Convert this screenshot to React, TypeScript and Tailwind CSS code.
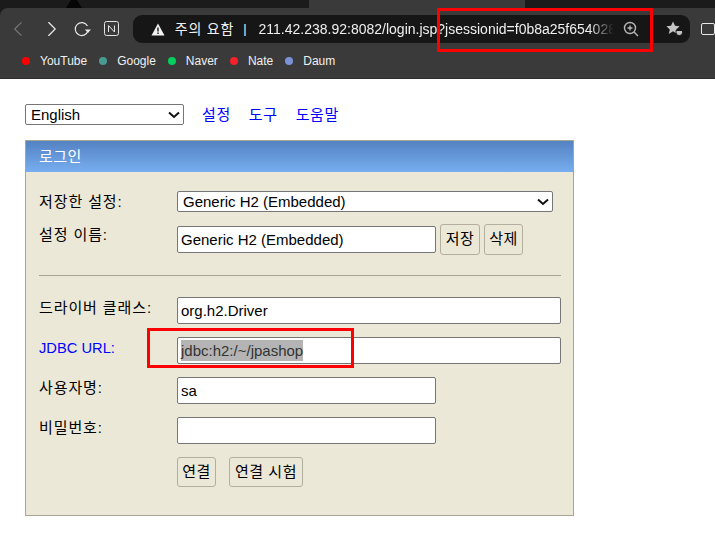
import { ChevronLeft, ChevronRight } from "lucide-react";

const bookmarks = [
  { name: "YouTube", color: "bg-[#ff0000]" },
  { name: "Google", color: "bg-[#4a9a94]" },
  { name: "Naver", color: "bg-[#03cf5d]" },
  { name: "Nate", color: "bg-[#f5222d]" },
  { name: "Daum", color: "bg-[#7b93d6]" },
];

const sans = "font-['Liberation_Sans','Noto_Sans_CJK_KR',sans-serif]";
const field = "h-[27px] bg-white border border-[#767676] rounded-[2px] px-[3px] text-[15px] text-black";
const btn = "bg-[#ece8d8] border border-[#b3ae9d] rounded-[3px] text-[15px] tracking-[0.5px] text-black";
const label = "w-[138px] text-[15px] leading-[20px] tracking-[0.9px] text-black";

function App() {
  return (
    <div className={`w-[715px] h-[547px] overflow-hidden bg-white ${sans}`}>
      {/* Browser chrome */}
      <div className="relative h-[79px] bg-[#1b1b1b]">
        <div className="flex h-[8px]">
          <svg width="24" height="8" viewBox="0 0 24 8" className="ml-[62px]">
            <path d="M4 8l5-8h6l5 8z" fill="#050505" />
          </svg>
          <div className="ml-[223px] w-[216px] bg-[#3a3a3a]" />
        </div>
        <div className="h-[71px] bg-[#3a3a3a] rounded-tl-[8px] border-b border-[#2c2c2c]">
          <div className="flex items-center h-[32px] pt-[5px] box-content">
            <ChevronLeft size={26} strokeWidth={1} className="ml-[5px] text-[#777]" />
            <ChevronRight size={26} strokeWidth={1.1} className="ml-[8px] text-[#e8e8e8]" />
            <svg width="18" height="18" viewBox="0 0 18 18" className="ml-[8px]" fill="none">
              <path d="M14.5 6A6.5 6.5 0 1 0 15 11" stroke="#e8e8e8" strokeWidth="1.2" />
              <path d="M12 9.5h6l-3 3.5z" fill="#e8e8e8" />
            </svg>
            <svg width="16" height="16" viewBox="0 0 16 16" className="ml-[13px]" fill="none">
              <rect x="0.5" y="0.5" width="14" height="14" rx="2" stroke="#e8e8e8" />
              <path d="M4.5 11V4.5l6 6.5V4.5" stroke="#e8e8e8" />
            </svg>
            <div className="flex items-center ml-[13px] w-[559px] h-[28px] bg-[#161616] rounded-[9px] text-[#f0f0f0]">
              <svg width="14" height="13" viewBox="0 0 14 13" className="ml-[18px]">
                <path d="M7 0.5l6.5 12H0.5z" fill="#f2f2f2" />
                <path d="M6.3 4.5h1.4v4H6.3zM6.3 9.5h1.4v1.4H6.3z" fill="#161616" />
              </svg>
              <span className="ml-[10px] text-[14px] tracking-[0.8px] whitespace-nowrap">주의 요함</span>
              <span className="ml-[9px] text-[13px]">|</span>
              <span className="ml-[12px] w-[355px] whitespace-nowrap text-[14px] [mask-image:linear-gradient(to_right,black_93%,transparent)]">
                211.42.238.92:8082/login.jsp?jsessionid=f0b8a25f654028
              </span>
              <svg width="16" height="16" viewBox="0 0 16 16" className="ml-[9px]" fill="none" stroke="#b8b8b8" strokeWidth="1.4">
                <circle cx="7" cy="7" r="5.5" />
                <path d="M11 11l4 4M7 4.5v5M4.5 7h5" />
              </svg>
              <svg width="18" height="16" viewBox="0 0 18 16" className="ml-[27px]">
                <path d="M7 0.5l2 4.3 4.6.5-3.4 3.1 1 4.6L7 10.2l-4.2 2.8 1-4.6L.4 5.3 5 4.8z" fill="#c4c4c4" />
                <path d="M10 9.5h6.5v2a3 3 0 0 1-3.2 3 3 3 0 0 1-3.3-3z" fill="#c4c4c4" stroke="#161616" />
              </svg>
            </div>
            <div className="ml-[11px] shrink-0 w-[14px] h-[12px] rounded-[2px] border border-[#e8e8e8]" />
          </div>
          <div className="flex items-center h-[16px] mt-[8px] ml-[22px] text-[12px] text-[#f0f0f0]">
            {bookmarks.map((b) => (
              <div key={b.name} className="flex items-center mr-[12px]">
                <span className={`w-[8px] h-[8px] rounded-full ${b.color}`} />
                <span className="ml-[10px]">{b.name}</span>
              </div>
            ))}
          </div>
        </div>
        {/* Annotation over the address bar */}
        <div className="absolute left-[437px] top-[8px] w-[216px] h-[44px] border-[3px] border-[#ff0000]" />
      </div>

      {/* Page */}
      <div className="pl-[25px]">
        <div className="flex items-center h-[21px] mt-[25px] text-[15px] leading-[20px]">
          <div className="relative w-[159px] h-[21px] bg-white border border-[#767676] rounded-[2px] pl-[5px] leading-[20px] text-black">
            English
            <svg width="12" height="8" viewBox="0 0 12 8" className="absolute right-[3px] top-[6px]" fill="none" stroke="#111" strokeWidth="2">
              <path d="M1 1.5l5 4.5 5-4.5" />
            </svg>
          </div>
          <a className="ml-[18px] tracking-[0.6px] text-[#0000ff]">설정</a>
          <a className="ml-[18px] tracking-[0.6px] text-[#0000ff]">도구</a>
          <a className="ml-[18px] tracking-[0.6px] text-[#0000ff]">도움말</a>
        </div>

        <div className="relative mt-[15px] w-[549px] h-[376px] bg-[#ece8d8] border border-[#a8a595]">
          <div className="h-[31px] pl-[13px] pt-[5px] text-[15px] leading-[22px] tracking-[0.5px] text-white bg-gradient-to-b from-[#5482c2] to-[#77aef0]">
            로그인
          </div>
          <div className="pl-[13px] pt-[19px]">
            <div className="flex">
              <div className={`${label} pt-[1px]`}>저장한 설정:</div>
              <div className="relative w-[376px] h-[21px] bg-white border border-[#767676] rounded-[2px] pl-[5px] text-[15px] leading-[19px] text-black">
                Generic H2 (Embedded)
                <svg width="12" height="8" viewBox="0 0 12 8" className="absolute right-[3px] top-[6px]" fill="none" stroke="#111" strokeWidth="2">
                  <path d="M1 1.5l5 4.5 5-4.5" />
                </svg>
              </div>
            </div>
            <div className="flex mt-[13px]">
              <div className={label}>설정 이름:</div>
              <div className="flex items-center mt-[-1px]">
                <input readOnly value="Generic H2 (Embedded)" className={`${field} w-[259px]`} />
                <button className={`${btn} h-[31px] w-[40px] ml-[4px]`}>저장</button>
                <button className={`${btn} h-[31px] w-[39px] ml-[4px]`}>삭제</button>
              </div>
            </div>
            <hr className="mt-[20px] w-[522px] border-t border-[#a8a595]" />
            <div className="mt-[21px] flex">
              <div className={`${label} pt-[1px]`}>드라이버 클래스:</div>
              <input readOnly value="org.h2.Driver" className={`${field} w-[384px]`} />
            </div>
            <div className="mt-[13px] flex">
              <div className="w-[138px] pt-[1px] text-[14.7px] leading-[20px] text-[#0000ff]">JDBC URL:</div>
              <div className={`${field} w-[384px] flex items-center`}>
                <span className="bg-[#b4b4b4] text-[#333] leading-[21px]">jdbc:h2:/~/jpashop</span>
              </div>
            </div>
            <div className="mt-[13px] flex">
              <div className={`${label} pt-[1px]`}>사용자명:</div>
              <input readOnly value="sa" className={`${field} w-[259px]`} />
            </div>
            <div className="mt-[13px] flex">
              <div className={`${label} pt-[1px]`}>비밀번호:</div>
              <input readOnly className={`${field} w-[259px]`} />
            </div>
            <div className="mt-[13px] flex pl-[138px]">
              <button className={`${btn} h-[30px] w-[39px]`}>연결</button>
              <button className={`${btn} h-[30px] w-[74px] ml-[13px]`}>연결 시험</button>
            </div>
          </div>
          {/* Annotation over the JDBC field */}
          <div className="absolute left-[121px] top-[187px] w-[207px] h-[40px] border-[3px] border-[#ff0000]" />
        </div>
      </div>
    </div>
  );
}

export default App;
